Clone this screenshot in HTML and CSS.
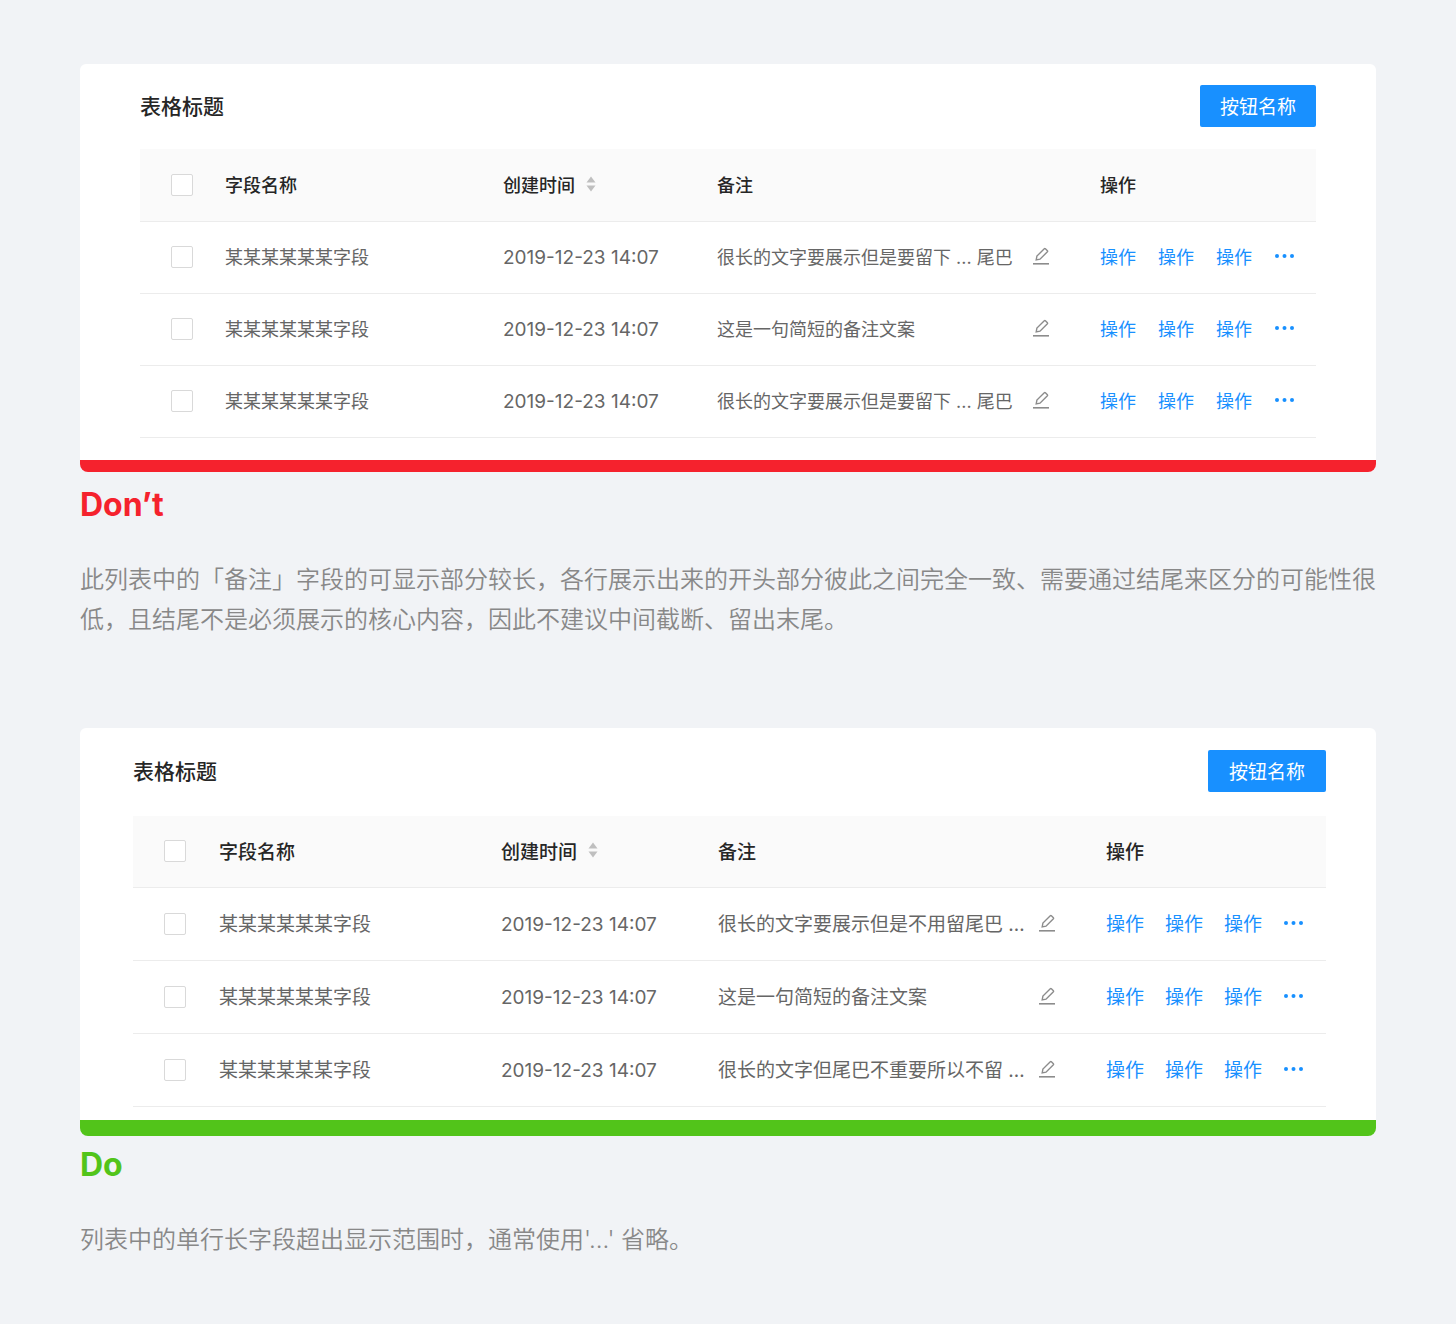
FILE: index.html
```html
<!DOCTYPE html>
<html lang="zh-CN">
<head>
    <meta charset="UTF-8">
    <meta name="viewport" content="width=device-width, initial-scale=1.0">
    <title>表格文字省略</title>
    <link rel="stylesheet" href="styles.css">
</head>
<body>
    <svg class="sprite" aria-hidden="true">
        <symbol id="edit" viewBox="0 0 18 18">
            <path d="M1 16.8h16" stroke-width="1.6"/>
            <path d="M4.2 12.9l.7-3.8 7.4-7.4a.8.8 0 0 1 1.1 0l2 2a.8.8 0 0 1 0 1.1L8 12.2z" stroke-width="1.4"/>
        </symbol>
        <symbol id="more" viewBox="0 0 20 6">
            <circle cx="3" cy="3" r="2"/>
            <circle cx="10.5" cy="3" r="2"/>
            <circle cx="18" cy="3" r="2"/>
        </symbol>
        <symbol id="sort" viewBox="0 0 10 16">
            <path d="M5 .5L9.5 6.5h-9z"/>
            <path d="M5 15.5L.5 9.5h9z"/>
        </symbol>
    </svg>
    <main class="page">
        <section class="example dont">
            <div class="card">
                <div class="card-header">
                    <h3>表格标题</h3>
                    <button class="primary" type="button">按钮名称</button>
                </div>
                <table>
                    <colgroup>
                        <col class="col-check"><col class="col-name"><col class="col-time"><col><col class="col-actions">
                    </colgroup>
                    <thead>
                        <tr>
                            <th class="check"><input type="checkbox" aria-label="全选"></th>
                            <th>字段名称</th>
                            <th><button class="sort" type="button">创建时间<svg><use href="#sort"/></svg></button></th>
                            <th>备注</th>
                            <th>操作</th>
                        </tr>
                    </thead>
                    <tbody>
                        <tr>
                            <td class="check"><input type="checkbox" aria-label="选择第 1 行"></td>
                            <td>某某某某某某字段</td>
                            <td class="time">2019-12-23 14:07</td>
                            <td><div class="note"><span>很长的文字要展示但是要留下 ... 尾巴</span><button class="edit" type="button" aria-label="编辑"><svg><use href="#edit"/></svg></button></div></td>
                            <td><div class="actions"><a href="#">操作</a><a href="#">操作</a><a href="#">操作</a><button class="more" type="button" aria-label="更多"><svg><use href="#more"/></svg></button></div></td>
                        </tr>
                        <tr>
                            <td class="check"><input type="checkbox" aria-label="选择第 2 行"></td>
                            <td>某某某某某某字段</td>
                            <td class="time">2019-12-23 14:07</td>
                            <td><div class="note"><span>这是一句简短的备注文案</span><button class="edit" type="button" aria-label="编辑"><svg><use href="#edit"/></svg></button></div></td>
                            <td><div class="actions"><a href="#">操作</a><a href="#">操作</a><a href="#">操作</a><button class="more" type="button" aria-label="更多"><svg><use href="#more"/></svg></button></div></td>
                        </tr>
                        <tr>
                            <td class="check"><input type="checkbox" aria-label="选择第 3 行"></td>
                            <td>某某某某某某字段</td>
                            <td class="time">2019-12-23 14:07</td>
                            <td><div class="note"><span>很长的文字要展示但是要留下 ... 尾巴</span><button class="edit" type="button" aria-label="编辑"><svg><use href="#edit"/></svg></button></div></td>
                            <td><div class="actions"><a href="#">操作</a><a href="#">操作</a><a href="#">操作</a><button class="more" type="button" aria-label="更多"><svg><use href="#more"/></svg></button></div></td>
                        </tr>
                    </tbody>
                </table>
            </div>
            <h2>Don’t</h2>
            <p>此列表中的「备注」字段的可显示部分较长，各行展示出来的开头部分彼此之间完全一致、需要通过结尾来区分的可能性很低，且结尾不是必须展示的核心内容，因此不建议中间截断、留出末尾。</p>
        </section>

        <section class="example do">
            <div class="card">
                <div class="card-header">
                    <h3>表格标题</h3>
                    <button class="primary" type="button">按钮名称</button>
                </div>
                <table>
                    <colgroup>
                        <col class="col-check"><col class="col-name"><col class="col-time"><col><col class="col-actions">
                    </colgroup>
                    <thead>
                        <tr>
                            <th class="check"><input type="checkbox" aria-label="全选"></th>
                            <th>字段名称</th>
                            <th><button class="sort" type="button">创建时间<svg><use href="#sort"/></svg></button></th>
                            <th>备注</th>
                            <th>操作</th>
                        </tr>
                    </thead>
                    <tbody>
                        <tr>
                            <td class="check"><input type="checkbox" aria-label="选择第 1 行"></td>
                            <td>某某某某某某字段</td>
                            <td class="time">2019-12-23 14:07</td>
                            <td><div class="note"><span>很长的文字要展示但是不用留尾巴 …</span><button class="edit" type="button" aria-label="编辑"><svg><use href="#edit"/></svg></button></div></td>
                            <td><div class="actions"><a href="#">操作</a><a href="#">操作</a><a href="#">操作</a><button class="more" type="button" aria-label="更多"><svg><use href="#more"/></svg></button></div></td>
                        </tr>
                        <tr>
                            <td class="check"><input type="checkbox" aria-label="选择第 2 行"></td>
                            <td>某某某某某某字段</td>
                            <td class="time">2019-12-23 14:07</td>
                            <td><div class="note"><span>这是一句简短的备注文案</span><button class="edit" type="button" aria-label="编辑"><svg><use href="#edit"/></svg></button></div></td>
                            <td><div class="actions"><a href="#">操作</a><a href="#">操作</a><a href="#">操作</a><button class="more" type="button" aria-label="更多"><svg><use href="#more"/></svg></button></div></td>
                        </tr>
                        <tr>
                            <td class="check"><input type="checkbox" aria-label="选择第 3 行"></td>
                            <td>某某某某某某字段</td>
                            <td class="time">2019-12-23 14:07</td>
                            <td><div class="note"><span>很长的文字但尾巴不重要所以不留 …</span><button class="edit" type="button" aria-label="编辑"><svg><use href="#edit"/></svg></button></div></td>
                            <td><div class="actions"><a href="#">操作</a><a href="#">操作</a><a href="#">操作</a><button class="more" type="button" aria-label="更多"><svg><use href="#more"/></svg></button></div></td>
                        </tr>
                    </tbody>
                </table>
            </div>
            <h2>Do</h2>
            <p>列表中的单行长字段超出显示范围时，通常使用'...' 省略。</p>
        </section>
    </main>
</body>
</html>
```
FILE: styles.css
```css
* {
    box-sizing: border-box;
}
body {
    margin: 0;
    background-color: #f1f3f6;
    font-family: Inter, "Noto Sans CJK SC", sans-serif;
    color: #666;
}
button {
    padding: 0;
    border: 0;
    background: none;
    font: inherit;
    color: inherit;
    cursor: pointer;
}
svg {
    display: block;
}
.sprite {
    display: none;
}
.page {
    display: flex;
    flex-direction: column;
    gap: 88px;
    padding: 64px 80px;
}
.card {
    background: #fff;
    border-radius: 6px 6px 8px 8px;
    overflow: hidden;
}
.dont .card {
    padding: 21px 60px 22px;
    border-bottom: 12px solid #f5222d;
    font-size: 18px;
}
.do .card {
    padding: 22px 50px 13px 53px;
    border-bottom: 16px solid #52c41a;
    font-size: 19px;
}
.card-header {
    display: flex;
    justify-content: space-between;
    align-items: center;
    margin-bottom: 22px;
}
.do .card-header {
    margin-bottom: 24px;
}
h3 {
    margin: 0;
    padding-top: 2px;
    font-size: 21px;
    line-height: 32px;
    font-weight: 500;
    color: #262626;
}
.primary {
    height: 42px;
    padding: 0 20px 2px;
    border-radius: 2px;
    background: #1890ff;
    font-size: 19px;
    color: #fff;
}
.do .primary {
    padding: 0 21px 2px;
}

table {
    width: 100%;
    table-layout: fixed;
    border-collapse: separate;
    border-spacing: 0;
}
.col-check { width: 85px; }
.col-name { width: 278px; }
.col-time { width: 214px; }
.col-actions { width: 216px; }
.do .col-check { width: 86px; }
.do .col-name { width: 282px; }
.do .col-time { width: 217px; }
.do .col-actions { width: 220px; }
th,
td {
    height: 72px;
    padding: 0 0 3px;
    border-bottom: 1px solid #ececec;
    text-align: left;
    white-space: nowrap;
}
.dont th,
.do td {
    height: 73px;
}
th {
    background: #fafafa;
    font-weight: 500;
    color: #262626;
}
td.time {
    padding-bottom: 0;
    font-size: 19px;
}
.check {
    padding: 0 0 1px 31px;
}
.check input {
    appearance: none;
    display: block;
    width: 22px;
    height: 22px;
    margin: 0;
    border: 1px solid #d9d9d9;
    border-radius: 2px;
    background: #fff;
}
.sort {
    display: flex;
    align-items: center;
    gap: 11px;
}
.sort svg {
    width: 10px;
    height: 16px;
    fill: #bfbfbf;
}
.note {
    display: flex;
    align-items: center;
    justify-content: space-between;
    padding-right: 50px;
}
.edit svg {
    width: 18px;
    height: 18px;
    fill: none;
    stroke: #8c8c8c;
}
.actions {
    display: flex;
    align-items: center;
    gap: 22px;
}
.do .actions {
    gap: 21px;
}
.actions a {
    color: #1890ff;
    text-decoration: none;
}
.more svg {
    width: 20px;
    height: 6px;
    fill: #1890ff;
}

h2 {
    margin: 13px 0 35px;
    font-size: 32px;
    line-height: 40px;
    font-weight: 700;
}
.dont h2 {
    color: #f5222d;
}
.do h2 {
    margin-top: 9px;
    color: #52c41a;
}
p {
    margin: 0;
    font-size: 24px;
    line-height: 40px;
    font-weight: 350;
    color: #888;
}
```
